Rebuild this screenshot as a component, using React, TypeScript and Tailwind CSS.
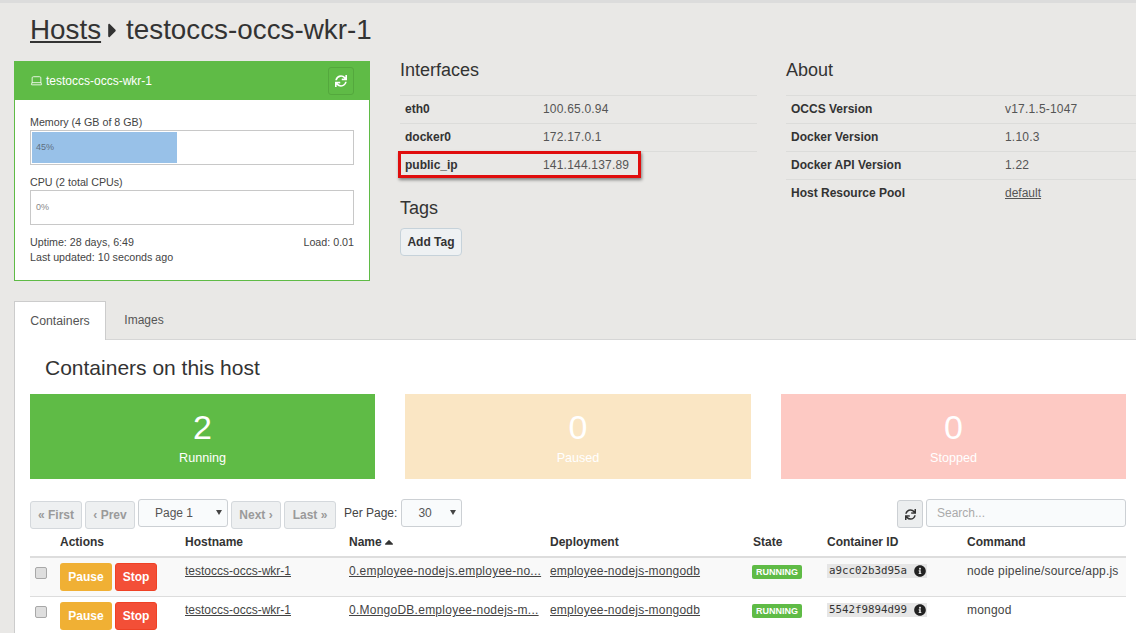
import { FaCaretRight, FaCaretUp, FaInfoCircle, FaSync } from "react-icons/fa"
import { Laptop } from "lucide-react"

const interfaces = [
  { name: "eth0", value: "100.65.0.94" },
  { name: "docker0", value: "172.17.0.1" },
  { name: "public_ip", value: "141.144.137.89", marked: true },
]

const about = [
  { name: "OCCS Version", value: "v17.1.5-1047" },
  { name: "Docker Version", value: "1.10.3" },
  { name: "Docker API Version", value: "1.22" },
  { name: "Host Resource Pool", value: "default", link: true },
]

const rows = [
  {
    name: "0.employee-nodejs.employee-no...",
    id: "a9cc02b3d95a",
    command: "node pipeline/source/app.js",
    rowClass: "bg-[#f9f9f9] border-t-2 border-[#dddddd]",
  },
  {
    name: "0.MongoDB.employee-nodejs-m...",
    id: "5542f9894d99",
    command: "mongod",
    rowClass: "bg-white border-t border-[#dddddd]",
  },
]

const gridCols = "grid grid-cols-[30px_125px_164px_201px_203px_74px_140px_159px]"

function PagerButton({ label, width }: { label: string; width: string }) {
  return (
    <div className={`${width} h-[28px] flex items-center justify-center mt-[2px] rounded-[3px] border border-[#d4d8dc] bg-[#eef0f1] text-[12px] font-bold text-[#9a9a9a]`}>
      {label}
    </div>
  )
}

function SelectBox({ label, width }: { label: string; width: string }) {
  return (
    <div className={`${width} pl-[16px] h-[28px] relative flex items-center rounded-[3px] border border-[#ccd0d4] bg-[#f9fbfc] text-[12px] text-[#555555]`}>
      {label}
      <span className="absolute right-[5px] top-[10px] w-0 h-0 border-l-[3px] border-r-[3px] border-t-[5px] border-l-transparent border-r-transparent border-t-[#444444]" />
    </div>
  )
}

function StatTile({ count, label, tileClass }: { count: number; label: string; tileClass: string }) {
  return (
    <div className={`${tileClass} h-[85px] flex flex-col items-center text-white`}>
      <div className="text-[34px] leading-[38px] mt-[14px]">{count}</div>
      <div className="text-[12.6px] leading-[18px] mt-[3px]">{label}</div>
    </div>
  )
}

function KeyValueTable({ items, nameWidth }: { items: { name: string; value: string; link?: boolean; marked?: boolean }[]; nameWidth: string }) {
  return (
    <div>
      {items.map((item) => (
        <div key={item.name} className="relative h-[28px] border-t border-[#dcdcda] flex items-center pl-[5px] pb-[2px] text-[12px]">
          <span className={`${nameWidth} font-bold text-[#333333]`}>{item.name}</span>
          <span className={item.link ? "underline text-[#555555]" : "text-[#555555] tracking-[0.2px]"}>{item.value}</span>
          {item.marked && (
            <div className="absolute left-[-2px] top-[-1px] w-[243px] h-[27px] border-[3px] border-[#e00d0d] shadow-[1px_2px_3px_rgba(0,0,0,0.45)]" />
          )}
        </div>
      ))}
    </div>
  )
}

export default function App() {
  return (
    <div className="w-[1136px] h-[633px] overflow-hidden bg-[#e9e8e6] text-[#333333] font-['Liberation_Sans',Arial,sans-serif]">
      <div className="h-[3px] bg-[#dcdcdc]" />
      <h1 className="h-[58px] pl-[30px] pb-[4px] text-[27.8px] leading-[38px] text-[#333333] flex items-center">
        <span className="underline">Hosts</span>
        <FaCaretRight className="w-[9px] h-[23px] ml-[7px] mr-[9px] text-[#333333]" />
        <span>testoccs-occs-wkr-1</span>
      </h1>

      <div className="flex h-[240px] pl-[14px]">
        <div className="w-[356px] h-[220px] bg-white border border-[#5fbb46]">
          <div className="h-[38px] bg-[#5fbb46] flex items-center justify-between pl-[15px] pr-[15px] text-white text-[12px]">
            <div className="flex items-center gap-[3px] pb-[1px]">
              <Laptop className="w-[13px] h-[13px]" strokeWidth={1.5} />
              <span>testoccs-occs-wkr-1</span>
            </div>
            <div className="w-[26px] h-[28px] rounded-[3px] border border-[#54a83d] flex items-center justify-center">
              <FaSync className="w-[12px] h-[12px]" />
            </div>
          </div>
          <div className="px-[15px] pt-[15px] text-[10.7px] text-[#444444]">
            <div className="leading-[15px]">Memory (4 GB of 8 GB)</div>
            <div className="h-[35px] border border-[#c8c8c8] p-[1px]">
              <div className="w-[145px] h-[31px] bg-[#98c1e8] pl-[4px] text-[9px] leading-[31px] text-[#5f6f7f]">45%</div>
            </div>
            <div className="leading-[15px] mt-[10px]">CPU (2 total CPUs)</div>
            <div className="h-[35px] border border-[#c8c8c8] pl-[5px] text-[9px] leading-[33px] text-[#888888]">0%</div>
            <div className="flex justify-between leading-[15px] mt-[10px]">
              <span>Uptime: 28 days, 6:49</span>
              <span>Load: 0.01</span>
            </div>
            <div className="leading-[15px]">Last updated: 10 seconds ago</div>
          </div>
        </div>

        <div className="w-[357px] ml-[30px]">
          <h2 className="text-[18px] leading-[20px] mt-[-1px] mb-[15px] text-[#333333]">Interfaces</h2>
          <KeyValueTable items={interfaces} nameWidth="w-[138px]" />
          <h2 className="text-[18px] leading-[20px] mt-[19px] mb-[10px] text-[#333333]">Tags</h2>
          <div className="w-[62px] h-[28px] rounded-[4px] border border-[#c6d2da] bg-[#eef1f3] flex items-center justify-center text-[12px] font-bold text-[#333333]">
            Add Tag
          </div>
        </div>

        <div className="flex-1 ml-[29px]">
          <h2 className="text-[18px] leading-[20px] mt-[-1px] mb-[15px] text-[#333333]">About</h2>
          <KeyValueTable items={about} nameWidth="w-[214px]" />
        </div>
      </div>

      <div className="pl-[14px] flex h-[39px]">
        <div className="w-[92px] h-[39px] bg-white border border-b-0 border-[#cccccc] flex items-center justify-center text-[12.3px] text-[#555555]">
          Containers
        </div>
        <div className="flex-1 flex border-b border-[#d6d6d6]">
          <div className="w-[76px] flex items-center justify-center text-[12px] text-[#555555]">Images</div>
        </div>
      </div>

      <div className="ml-[14px] h-[293px] bg-white border-l border-[#cccccc] pl-[15px]">
        <h2 className="text-[21px] leading-[24px] pl-[15px] pt-[16px] pb-[14px] h-[54px] text-[#333333]">Containers on this host</h2>

        <div className="w-[1096px] grid grid-cols-[345px_346px_345px] gap-x-[30px]">
          <StatTile count={2} label="Running" tileClass="bg-[#5fbb46]" />
          <StatTile count={0} label="Paused" tileClass="bg-[#fae6c4]" />
          <StatTile count={0} label="Stopped" tileClass="bg-[#fdc9c3]" />
        </div>

        <div className="w-[1096px] h-[28px] flex items-start mt-[20px] gap-[3px]">
          <PagerButton label="« First" width="w-[52px]" />
          <PagerButton label="‹ Prev" width="w-[50px]" />
          <SelectBox label="Page 1" width="w-[90px]" />
          <PagerButton label="Next ›" width="w-[50px]" />
          <PagerButton label="Last »" width="w-[52px]" />
          <span className="text-[12px] leading-[28px] ml-[5px] mr-[1px] text-[#444444]">Per Page:</span>
          <SelectBox label="30" width="w-[61px]" />
          <div className="ml-auto flex items-start gap-[3px]">
            <div className="w-[26px] h-[28px] mt-[1px] rounded-[3px] border border-[#ccd0d4] bg-[#eceeef] flex items-center justify-center">
              <FaSync className="w-[11px] h-[11px] text-[#333333]" />
            </div>
            <div className="w-[200px] h-[28px] rounded-[3px] border border-[#ccd0d4] bg-[#f9fbfc] pl-[10px] text-[12px] leading-[26px] text-[#aaaaaa]">
              Search...
            </div>
          </div>
        </div>

        <div className="w-[1096px]">
          <div className={`${gridCols} h-[29px] items-center text-[12px] font-bold text-[#333333]`}>
            <span />
            <span>Actions</span>
            <span>Hostname</span>
            <span className="flex items-center gap-[2px]">
              Name <FaCaretUp className="w-[10px] h-[14px]" />
            </span>
            <span>Deployment</span>
            <span>State</span>
            <span>Container ID</span>
            <span>Command</span>
          </div>
          {rows.map((row) => (
            <div key={row.id} className={`${gridCols} ${row.rowClass} h-[40px] pt-[5px] text-[12px] text-[#444444]`}>
              <div className="pl-[5px] pt-[4px]">
                <div className="w-[12px] h-[12px] rounded-[2px] border border-[#a8a8a8] bg-[#dedede]" />
              </div>
              <div className="flex gap-[3px]">
                <div className="w-[52px] h-[28px] rounded-[3px] bg-[#f0b034] text-white font-bold flex items-center justify-center">Pause</div>
                <div className="w-[42px] h-[28px] rounded-[3px] bg-[#f34f37] border border-[#ef4125] text-white font-bold flex items-center justify-center">Stop</div>
              </div>
              <span className="underline leading-[14px] pt-[1px]">testoccs-occs-wkr-1</span>
              <span className="underline leading-[14px] pt-[1px] tracking-[0.25px]">{row.name}</span>
              <span className="underline leading-[14px] pt-[1px] tracking-[0.2px]">employee-nodejs-mongodb</span>
              <div className="pt-[2px] ml-[-1px]">
                <div className="w-[50px] h-[14px] rounded-[2px] bg-[#5fbb46] text-white text-[9px] font-bold leading-[14px] text-center">RUNNING</div>
              </div>
              <div className="pt-[1px]">
                <div className="flex items-center justify-between w-[100px] h-[14px] pl-[2px] pr-[1px] bg-[#e6e6e6] font-['DejaVu_Sans_Mono',monospace] text-[10.8px] text-[#333333]">
                  {row.id}
                  <FaInfoCircle className="w-[12px] h-[12px] text-[#222222]" />
                </div>
              </div>
              <span className="leading-[14px] pt-[1px] tracking-[0.2px]">{row.command}</span>
            </div>
          ))}
        </div>
      </div>
    </div>
  )
}
